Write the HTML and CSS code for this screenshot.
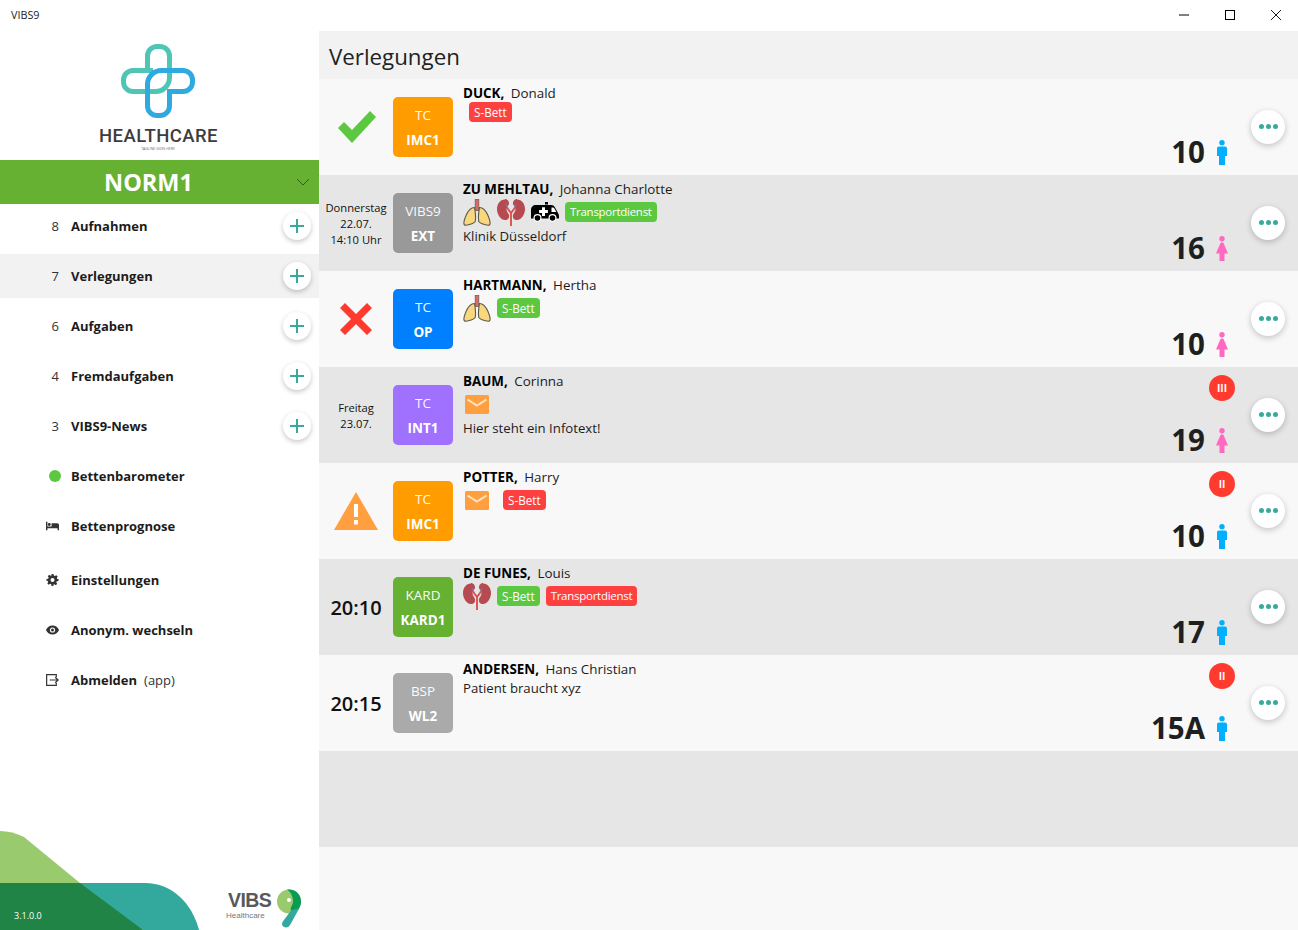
FILE: index.html
```html
<!DOCTYPE html>
<html lang="de">
<head>
<meta charset="utf-8">
<title>VIBS9</title>
<link rel="stylesheet" href="styles.css">
</head>
<body>
<svg class="defs" width="0" height="0" aria-hidden="true">
  <symbol id="lungs" viewBox="0 0 28 27">
    <rect x="12.2" y="0.5" width="3.6" height="11" fill="#d96a6a" stroke="#7a5a50" stroke-width=".8"/>
    <path d="M11.5 8.5C8 8.500 5 12 3 16.500 1.500 20 .5 23 1 25c.4 1.500 2 1.500 4.500.8 3-.9 6-1.800 6.700-3.300.5-3 .3-9-.7-14z" fill="#f8d77f" stroke="#5d5a4c" stroke-width="1.100"/>
    <path d="M16.500 8.500C20 8.500 23 12 25 16.500c1.500 3.500 2.500 6.500 2 8.500-.4 1.500-2 1.500-4.500.8-3-.9-6-1.800-6.700-3.300-.5-3-.3-9 .7-14z" fill="#f8d77f" stroke="#5d5a4c" stroke-width="1.100"/>
  </symbol>
  <symbol id="kidney" viewBox="0 0 28 27">
    <path d="M8 0.500C3 .5 0 5 0 10c0 6 4 11 8 11 3 0 4.500-2 4-5-.4-2-2.500-3-2.500-6 0-2.500 2-3 2.500-5 .3-2.500-1.500-5-4-5z" fill="#b54a50"/>
    <path d="M20 0.500c5 0 8 4.500 8 9.500 0 6-4 11-8 11-3 0-4.500-2-4-5 .4-2 2.500-3 2.500-6 0-2.500-2-3-2.500-5-.3-2.500 1.500-5 4-5z" fill="#b54a50"/>
    <path d="M14 27V14M14 14L9.500 8M14 14l4.500-6" stroke="#e0473f" stroke-width="1.800" fill="none"/>
    <path d="M9 5l3 6M19 5l-3 6" stroke="#7f86c4" stroke-width=".8" fill="none"/>
  </symbol>
  <symbol id="ambulance" viewBox="0 0 28 20">
    <rect x="14" y="0" width="3" height="2.500" fill="#000"/>
    <path d="M5 3h15c2 0 3 .8 4 2.500l3 5.500c.6 1 1 1.800 1 3v2.500H0V8c0-3 2-5 5-5z" fill="#000"/>
    <path d="M20.500 5.500h1.300c.7 0 1.200.3 1.600 1l1.900 3.500h-4.800z" fill="#fff"/>
    <path d="M11 5.200h3v2.900h2.900v3H14V14h-3v-2.900H8.100v-3H11z" fill="#fff"/>
    <circle cx="6.500" cy="16" r="3.400" fill="#000" stroke="#fff" stroke-width="1.200"/>
    <circle cx="21.500" cy="16" r="3.400" fill="#000" stroke="#fff" stroke-width="1.200"/>
  </symbol>
  <symbol id="mail" viewBox="0 0 24 19">
    <rect width="24" height="19" rx="1.500" fill="#ff9f40"/>
    <path d="M2.500 4.500L12 10.500l9.500-6" fill="none" stroke="#ffe6c8" stroke-width="2"/>
  </symbol>
  <symbol id="male" viewBox="0 0 10 25">
    <circle cx="5" cy="2.700" r="2.700" fill="#00b0ff"/>
    <path d="M2 6.500h6c1.200 0 2 .8 2 2V16H8v9H2v-9H0V8.500c0-1.200.8-2 2-2z" fill="#00b0ff"/>
  </symbol>
  <symbol id="female" viewBox="0 0 12 25">
    <circle cx="6" cy="2.700" r="2.700" fill="#ff69c0"/>
    <path d="M6 6.500c1.200 0 1.700.5 2 1.500l4 9.500H8.500V25h-5v-7.500H0L4 8c.3-1 .8-1.500 2-1.500z" fill="#ff69c0"/>
  </symbol>
  <symbol id="plus" viewBox="0 0 16 16">
    <path d="M8 1v14M1 8h14" stroke="#3aa99b" stroke-width="2" fill="none"/>
  </symbol>
</svg>

<header class="titlebar">
  <span class="app-name">VIBS9</span>
  <div class="win-controls">
    <svg class="win-icon" viewBox="0 0 10 10"><path d="M0 5h10" stroke="#000" fill="none"/></svg>
    <svg class="win-icon" viewBox="0 0 10 10"><rect x=".5" y=".5" width="9" height="9" stroke="#000" fill="none"/></svg>
    <svg class="win-icon" viewBox="0 0 10 10"><path d="M0 0l10 10M10 0L0 10" stroke="#000" stroke-width=".9" fill="none"/></svg>
  </div>
</header>

<div class="app">
  <aside class="sidebar">
    <div class="brand">
      <svg class="brand-mark" viewBox="0 0 74 74">
        <path d="M26.500 26.500V12A9.500 9.500 0 0 1 36 2.500h3A9.500 9.500 0 0 1 48.500 12V34A14 14 0 0 1 34.500 47.500H12A9.500 9.500 0 0 1 2.500 38V36A9.500 9.500 0 0 1 12 26.500H32" fill="none" stroke="#4ec5b5" stroke-width="5"/>
        <path d="M42 26.500H62A9.500 9.500 0 0 1 71.500 36V38A9.500 9.500 0 0 1 62 47.500H48.500V62A9.500 9.500 0 0 1 39 71.500H36A9.500 9.500 0 0 1 26.500 62V40A14 14 0 0 1 40.500 26.500H46" fill="none" stroke="#2eaae1" stroke-width="5"/>
      </svg>
      <div class="brand-name">HEALTHCARE</div>
      <div class="brand-tag">TAGLINE GOES HERE</div>
    </div>
    <div class="ward">
      <span class="ward-name">NORM1</span>
      <svg class="ward-chevron" viewBox="0 0 12 6"><path d="M0 0l6 6 6-6" fill="none" stroke="#2f5f18"/></svg>
    </div>
    <nav class="nav">
      <div class="nav-item"><span class="nav-slot">8</span><b>Aufnahmen</b><span class="add"><svg class="add-icon"><use href="#plus"/></svg></span></div>
      <div class="nav-item active"><span class="nav-slot">7</span><b>Verlegungen</b><span class="add"><svg class="add-icon"><use href="#plus"/></svg></span></div>
      <div class="nav-item"><span class="nav-slot">6</span><b>Aufgaben</b><span class="add"><svg class="add-icon"><use href="#plus"/></svg></span></div>
      <div class="nav-item"><span class="nav-slot">4</span><b>Fremdaufgaben</b><span class="add"><svg class="add-icon"><use href="#plus"/></svg></span></div>
      <div class="nav-item"><span class="nav-slot">3</span><b>VIBS9-News</b><span class="add"><svg class="add-icon"><use href="#plus"/></svg></span></div>
      <div class="nav-item"><span class="nav-slot"><span class="dot"></span></span><b>Bettenbarometer</b></div>
      <div class="nav-item"><span class="nav-slot"><svg class="nav-icon" viewBox="0 0 14 9"><path d="M0 0h1.500v5H6V1.500h6c1.200 0 2 .8 2 2V9h-1.500V7h-11v2H0z" fill="#333"/><circle cx="3.500" cy="3" r="1.600" fill="#333"/></svg></span><b>Bettenprognose</b></div>
      <div class="nav-item gap-top"><span class="nav-slot"><svg class="nav-icon" viewBox="0 0 12 12"><path d="M5 0h2l.3 1.600 1.100.5L9.800 1.200l1.400 1.400-.9 1.400.5 1.100L12 5v2l-1.700.3-.5 1.100.9 1.400-1.400 1.400-1.400-.9-1.100.5L7 12H5l-.3-1.700-1.100-.5-1.400.9-1.400-1.400.9-1.400-.5-1.100L0 7V5l1.700-.3.500-1.100-.9-1.400 1.400-1.400 1.400.9 1.100-.5z" fill="#333"/><circle cx="6" cy="6" r="2" fill="#fff"/></svg></span><b>Einstellungen</b></div>
      <div class="nav-item"><span class="nav-slot"><svg class="nav-icon" viewBox="0 0 13 9"><path d="M6.500 0C9.500 0 12 2 13 4.500 12 7 9.500 9 6.500 9S1 7 0 4.500C1 2 3.500 0 6.500 0z" fill="#333"/><circle cx="6.500" cy="4.500" r="2.600" fill="#fff"/><circle cx="6.500" cy="4.500" r="1.500" fill="#333"/></svg></span><b>Anonym. wechseln</b></div>
      <div class="nav-item"><span class="nav-slot"><svg class="nav-icon" viewBox="0 0 12 11"><path d="M9.500 3V.6H.6v9.800h8.900V8" fill="none" stroke="#333" stroke-width="1.100"/><path d="M3.500 5.500H11M8.500 3l2.700 2.500L8.500 8" fill="none" stroke="#333" stroke-width="1.100"/></svg></span><b>Abmelden</b><span class="nav-note">(app)</span></div>
    </nav>
    <footer class="foot">
      <svg class="foot-art" viewBox="0 0 200 99">
        <path d="M0 52H145C172 52 192 72 199 99H143z" fill="#33a99d"/>
        <path d="M0 0C8 0 16 2 24 6L80 52H0z" fill="#9aca6e"/>
        <path d="M0 52H80L143 99H0z" fill="#1f8445"/>
      </svg>
      <span class="version">3.1.0.0</span>
      <div class="vibs">
        <div class="vibs-text">
          <span class="vibs-name">VIBS</span>
          <span class="vibs-sub">Healthcare</span>
        </div>
        <svg class="vibs-nine" viewBox="0 0 24 39">
          <circle cx="12" cy="12.500" r="12" fill="#9aca6e"/>
          <path d="M10 .6C17 -.5 24 4 24 12.500c0 3-1 5.500-2.500 8L17 24.500c-2 0-4-2.500-3-6.500 2-3 3-6 1-11C14 4 12 2 10 .6z" fill="#0a9b55"/>
          <circle cx="12" cy="11" r="2" fill="#fff"/>
          <path d="M14 21.500L22.500 19 13 36c-1.500 2.500-4 3-6 2-2-1-2.500-3-1.500-5z" fill="#33a99d"/>
        </svg>
      </div>
    </footer>
  </aside>

  <main class="main">
    <h1 class="page-title">Verlegungen</h1>

    <article class="row">
      <div class="when"><svg class="status-icon check" viewBox="0 0 38 32"><path d="M0 17l6-6 8 8L32 0l6 6-24 26z" fill="#5cc840"/></svg></div>
      <div class="unit orange"><span>TC</span><b>IMC1</b></div>
      <div class="info">
        <div class="name"><b>DUCK,</b> Donald</div>
        <div class="tags plain"><span class="tag red">S-Bett</span></div>
      </div>
      <div class="bed"><div class="bed-line"><span class="bed-no">10</span><span class="sex"><svg class="male"><use href="#male"/></svg></span></div></div>
      <button class="more"><i></i><i></i><i></i></button>
    </article>

    <article class="row alt">
      <div class="when small">Donnerstag<br>22.07.<br>14:10 Uhr</div>
      <div class="unit gray"><span>VIBS9</span><b>EXT</b></div>
      <div class="info">
        <div class="name"><b>ZU MEHLTAU,</b> Johanna Charlotte</div>
        <div class="tags"><svg class="organ"><use href="#lungs"/></svg><svg class="organ"><use href="#kidney"/></svg><svg class="amb"><use href="#ambulance"/></svg><span class="tag long green">Transportdienst</span></div>
        <div class="note">Klinik Düsseldorf</div>
      </div>
      <div class="bed"><div class="bed-line"><span class="bed-no">16</span><span class="sex"><svg class="female"><use href="#female"/></svg></span></div></div>
      <button class="more"><i></i><i></i><i></i></button>
    </article>

    <article class="row">
      <div class="when"><svg class="status-icon cross" viewBox="0 0 32 32"><path d="M0 5l5-5 11 11L27 0l5 5-11 11 11 11-5 5-11-11L5 32l-5-5 11-11z" fill="#ff3b30"/></svg></div>
      <div class="unit blue"><span>TC</span><b>OP</b></div>
      <div class="info">
        <div class="name"><b>HARTMANN,</b> Hertha</div>
        <div class="tags"><svg class="organ"><use href="#lungs"/></svg><span class="tag green">S-Bett</span></div>
      </div>
      <div class="bed"><div class="bed-line"><span class="bed-no">10</span><span class="sex"><svg class="female"><use href="#female"/></svg></span></div></div>
      <button class="more"><i></i><i></i><i></i></button>
    </article>

    <article class="row alt">
      <div class="when small">Freitag<br>23.07.</div>
      <div class="unit purple"><span>TC</span><b>INT1</b></div>
      <div class="info">
        <div class="name"><b>BAUM,</b> Corinna</div>
        <div class="tags"><svg class="mail"><use href="#mail"/></svg></div>
        <div class="note">Hier steht ein Infotext!</div>
      </div>
      <div class="bed"><span class="level">III</span><div class="bed-line"><span class="bed-no">19</span><span class="sex"><svg class="female"><use href="#female"/></svg></span></div></div>
      <button class="more"><i></i><i></i><i></i></button>
    </article>

    <article class="row">
      <div class="when"><svg class="status-icon warn" viewBox="0 0 44 38"><path d="M22 0l22 38H0z" fill="#ff9f40"/><path d="M20 12h4v13h-4zM20 28h4v4.500h-4z" fill="#fff"/></svg></div>
      <div class="unit orange"><span>TC</span><b>IMC1</b></div>
      <div class="info">
        <div class="name"><b>POTTER,</b> Harry</div>
        <div class="tags"><svg class="mail"><use href="#mail"/></svg><span class="tag red wide-gap">S-Bett</span></div>
      </div>
      <div class="bed"><span class="level">II</span><div class="bed-line"><span class="bed-no">10</span><span class="sex"><svg class="male"><use href="#male"/></svg></span></div></div>
      <button class="more"><i></i><i></i><i></i></button>
    </article>

    <article class="row alt">
      <div class="when big">20:10</div>
      <div class="unit green-bg"><span>KARD</span><b>KARD1</b></div>
      <div class="info">
        <div class="name"><b>DE FUNES,</b> Louis</div>
        <div class="tags"><svg class="organ"><use href="#kidney"/></svg><span class="tag green">S-Bett</span><span class="tag long red">Transportdienst</span></div>
      </div>
      <div class="bed"><div class="bed-line"><span class="bed-no">17</span><span class="sex"><svg class="male"><use href="#male"/></svg></span></div></div>
      <button class="more"><i></i><i></i><i></i></button>
    </article>

    <article class="row">
      <div class="when big">20:15</div>
      <div class="unit lightgray"><span>BSP</span><b>WL2</b></div>
      <div class="info">
        <div class="name"><b>ANDERSEN,</b> Hans Christian</div>
        <div class="note">Patient braucht xyz</div>
      </div>
      <div class="bed"><span class="level">II</span><div class="bed-line"><span class="bed-no">15A</span><span class="sex"><svg class="male"><use href="#male"/></svg></span></div></div>
      <button class="more"><i></i><i></i><i></i></button>
    </article>

    <div class="row alt"></div>
    <div class="rest"></div>
  </main>
</div>
</body>
</html>
```
FILE: styles.css
```css
* { box-sizing: border-box; }
html, body { height: 100%; }
body {
  margin: 0;
  height: 930px;
  overflow: hidden;
  background: #fff;
  color: #111;
  font-family: "Open Sans", "Noto Sans", sans-serif;
  font-size: 13px;
  display: flex;
  flex-direction: column;
}
.defs { position: absolute; }

.titlebar {
  height: 31px;
  flex: none;
  display: flex;
  align-items: center;
  justify-content: space-between;
  padding: 0 17px 2px 11px;
}
.app-name { font-size: 10.8px; color: #222; }
.win-controls { display: flex; gap: 36px; }
.win-icon { width: 10px; height: 10px; display: block; }

.app { flex: 1; display: flex; min-height: 0; }

.sidebar {
  width: 319px;
  flex: none;
  display: flex;
  flex-direction: column;
  background: #fff;
}
.brand {
  height: 129px;
  flex: none;
  display: flex;
  flex-direction: column;
  align-items: center;
  padding-top: 13px;
}
.brand-mark { width: 74px; height: 74px; display: block; margin-left: -3px; }
.brand-name {
  font-family: "Roboto", sans-serif;
  font-weight: 500;
  font-size: 18.5px;
  line-height: 20px;
  color: #3d3d3d;
  letter-spacing: .45px;
  margin-top: 8px;
  margin-left: -2px;
}
.brand-tag { font-size: 3.5px; line-height: 5px; color: #666; margin-left: -3px; }

.ward {
  height: 44px;
  flex: none;
  background: #66b032;
  position: relative;
  display: flex;
  align-items: center;
  justify-content: center;
  padding-right: 22px;
}
.ward-name { color: #fff; font-size: 23.5px; font-weight: 700; }
.ward-chevron { position: absolute; right: 10px; top: 19px; width: 12px; height: 6px; }

.nav { flex: none; display: flex; flex-direction: column; gap: 6px; }
.nav-item {
  height: 44px;
  display: flex;
  align-items: center;
  font-size: 13px;
  padding-right: 8px;
}
.nav-item b { font-weight: 700; color: #1c1c1c; letter-spacing: 0; }
.nav-item.active { background: #f2f2f2; }
.nav-item.gap-top { margin-top: 4px; }
.nav-slot {
  width: 71px;
  flex: none;
  padding-right: 12px;
  display: flex;
  justify-content: flex-end;
  align-items: center;
  color: #333;
}
.nav-note { margin-left: 7px; color: #333; }
.dot { width: 12px; height: 12px; border-radius: 50%; background: #5cc840; margin-right: -2px; }
.nav-icon { width: 13px; height: 12px; display: block; }
.add {
  margin-left: auto;
  width: 28px;
  height: 28px;
  border-radius: 50%;
  background: #fff;
  box-shadow: 0 2px 5px rgba(0,0,0,.22);
  display: flex;
  align-items: center;
  justify-content: center;
}
.add-icon { width: 16px; height: 16px; display: block; }

.foot { margin-top: auto; height: 99px; position: relative; flex: none; }
.foot-art { position: absolute; left: 0; bottom: 0; width: 200px; height: 99px; display: block; }
.version { position: absolute; left: 14px; bottom: 8px; color: #fff; font-size: 9px; }
.vibs { position: absolute; left: 228px; bottom: 2px; display: flex; align-items: flex-end; }
.vibs-text { display: flex; flex-direction: column; margin-bottom: 7px; width: 44px; }
.vibs-name {
  font-family: "Liberation Sans", sans-serif;
  font-size: 19.5px;
  line-height: 19px;
  font-weight: 700;
  color: #58595b;
  letter-spacing: -.6px;
}
.vibs-sub {
  font-family: "Liberation Sans", sans-serif;
  font-size: 8px;
  line-height: 10px;
  margin-top: 1px;
  color: #777;
  margin-left: -2px;
}
.vibs-nine { width: 24px; height: 39px; display: block; margin-left: 5px; }

.main { flex: 1; min-width: 0; display: flex; flex-direction: column; background: #f2f2f2; }
.page-title {
  margin: 0;
  height: 48px;
  flex: none;
  padding: 8px 0 0 10px;
  font-size: 22.3px;
  line-height: 36px;
  font-weight: 400;
  color: #222;
}

.row { height: 96px; flex: none; display: flex; background: #f8f8f8; }
.row.alt { background: #e6e6e6; }
.rest { flex: 1; background: #f8f8f8; }

.when {
  width: 74px;
  flex: none;
  display: flex;
  align-items: center;
  justify-content: center;
  text-align: center;
}
.when.small { font-size: 11.2px; line-height: 16px; padding-top: 1px; }
.when.big { font-size: 20px; font-weight: 600; }
.status-icon { width: 38px; height: 32px; display: block; }
.status-icon.check { margin-left: 2px; }
.status-icon.cross { width: 32px; }
.status-icon.warn { width: 44px; height: 38px; }

.unit {
  width: 60px;
  height: 60px;
  flex: none;
  margin-top: 18px;
  border-radius: 5px;
  color: #fff;
  display: flex;
  flex-direction: column;
  align-items: center;
  padding-top: 9px;
  font-size: 13.5px;
  line-height: 19px;
}
.unit b { font-weight: 700; margin-top: 6px; font-size: 13.5px; }
.unit span { font-weight: 400; opacity: .95; }
.orange { background: #ff9c00; }
.gray { background: #999; }
.blue { background: #0080ff; }
.purple { background: #a070ff; }
.green-bg { background: #66b032; }
.lightgray { background: #aaa; }

.info { flex: 1; min-width: 0; margin-left: 10px; padding-top: 5px; }
.name { height: 18px; line-height: 19px; font-size: 13.4px; color: #1c1c1c; white-space: nowrap; }
.name b { font-weight: 700; color: #000; margin-right: 3px; letter-spacing: 0; }
.tags { display: flex; align-items: center; gap: 6px; height: 28px; }
.tags.plain { height: 20px; padding-left: 6px; }
.note { height: 20px; line-height: 20px; font-size: 13.2px; color: #1c1c1c; }
.tag {
  height: 20px;
  line-height: 20px;
  border-radius: 4px;
  padding: 0 5px;
  color: #fff;
  font-size: 11.7px;
  white-space: nowrap;
}
.tag.long { font-size: 11.5px; letter-spacing: -.27px; }
.tag.red { background: #ff4040; }
.tag.green { background: #5cc840; }
.tag.wide-gap { margin-left: 8px; }
.organ { width: 28px; height: 27px; display: block; }
.amb { width: 28px; height: 20px; display: block; }
.mail { width: 24px; height: 19px; display: block; margin-left: 2px; }

.bed {
  flex: none;
  width: 120px;
  display: flex;
  flex-direction: column;
  align-items: flex-end;
  padding-top: 8px;
}
.level {
  width: 26px;
  height: 26px;
  border-radius: 50%;
  background: #ff3b30;
  color: #fff;
  font-size: 10px;
  font-weight: 700;
  line-height: 26px;
  text-align: center;
}
.bed-line { margin-top: auto; display: flex; align-items: center; height: 44px; margin-bottom: 1px; }
.bed-no { font-size: 29.5px; line-height: 44px; font-weight: 700; color: #1f1f1f; margin-right: 4px; }
.sex { width: 26px; display: flex; justify-content: center; }
.male { width: 10px; height: 25px; display: block; }
.female { width: 12px; height: 25px; display: block; }

.more {
  flex: none;
  width: 34px;
  height: 34px;
  margin: 31px 13px 0 16px;
  padding: 0 0 1px;
  border: 0;
  border-radius: 50%;
  background: #fff;
  box-shadow: 0 2px 6px rgba(0,0,0,.22);
  display: flex;
  align-items: center;
  justify-content: center;
  gap: 2px;
}
.more i { width: 5px; height: 5px; border-radius: 50%; background: #3aa99b; display: block; }
```
